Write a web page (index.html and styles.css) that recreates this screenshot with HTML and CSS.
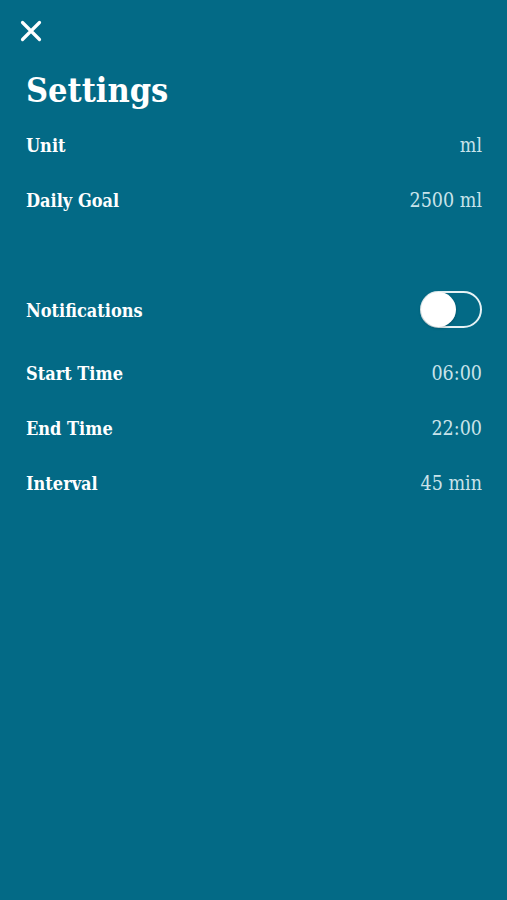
FILE: index.html
```html
<!DOCTYPE html>
<html>
<head>
<meta charset="utf-8">
<link rel="stylesheet" href="styles.css">
</head>
<body>
<div class="screen">
  <div class="topbar">
    <svg class="close" width="22" height="22" viewBox="0 0 22 22">
      <path d="M2.5 2.5 L19.5 19.5 M19.5 2.5 L2.5 19.5" stroke="#ffffff" stroke-width="3.2" stroke-linecap="round" fill="none"/>
    </svg>
  </div>
  <h1 class="title">Settings</h1>
  <div class="row"><span class="label">Unit</span><span class="value">ml</span></div>
  <div class="row"><span class="label">Daily Goal</span><span class="value">2500 ml</span></div>
  <div class="spacer"></div>
  <div class="row row-toggle"><span class="label">Notifications</span><span class="toggle"><span class="thumb"></span></span></div>
  <div class="row"><span class="label">Start Time</span><span class="value">06:00</span></div>
  <div class="row"><span class="label">End Time</span><span class="value">22:00</span></div>
  <div class="row"><span class="label">Interval</span><span class="value">45 min</span></div>
</div>
</body>
</html>
```
FILE: styles.css
```css
html, body {
  margin: 0;
  padding: 0;
  background: #036a86;
}
.screen {
  width: 507px;
  height: 900px;
  background: #036a86;
  color: #ffffff;
  font-family: "DejaVu Serif Condensed", "DejaVu Serif", serif;
  box-sizing: border-box;
  padding: 0 26px 0 26px;
}
.topbar {
  height: 42px;
  padding-top: 20px;
  box-sizing: border-box;
  margin-left: -6px;
}
.close {
  display: block;
}
.title {
  margin: 28px 0 7.5px 0;
  height: 40px;
  line-height: 40px;
  font-size: 34px;
  font-weight: bold;
}
.row {
  height: 55px;
  display: flex;
  align-items: center;
  justify-content: space-between;
}
.label {
  font-weight: bold;
  font-size: 18px;
}
.value {
  font-family: "DejaVu Serif Condensed", "DejaVu Serif", serif;
  font-weight: normal;
  font-size: 19.5px;
  color: #c9e3ea;
  margin-right: -1px;
}
.spacer {
  height: 55px;
}
.row-toggle {
  margin-bottom: 8px;
}
.toggle {
  width: 62px;
  height: 37px;
  border: 2px solid #e6f2f5;
  border-radius: 20px;
  box-sizing: border-box;
  position: relative;
  margin-right: -1px;
  margin-top: -1px;
}
.thumb {
  position: absolute;
  left: -1px;
  top: -1px;
  width: 35px;
  height: 35px;
  border-radius: 50%;
  background: #ffffff;
  box-shadow: 0 1px 3px rgba(0,0,0,0.25);
}
```
